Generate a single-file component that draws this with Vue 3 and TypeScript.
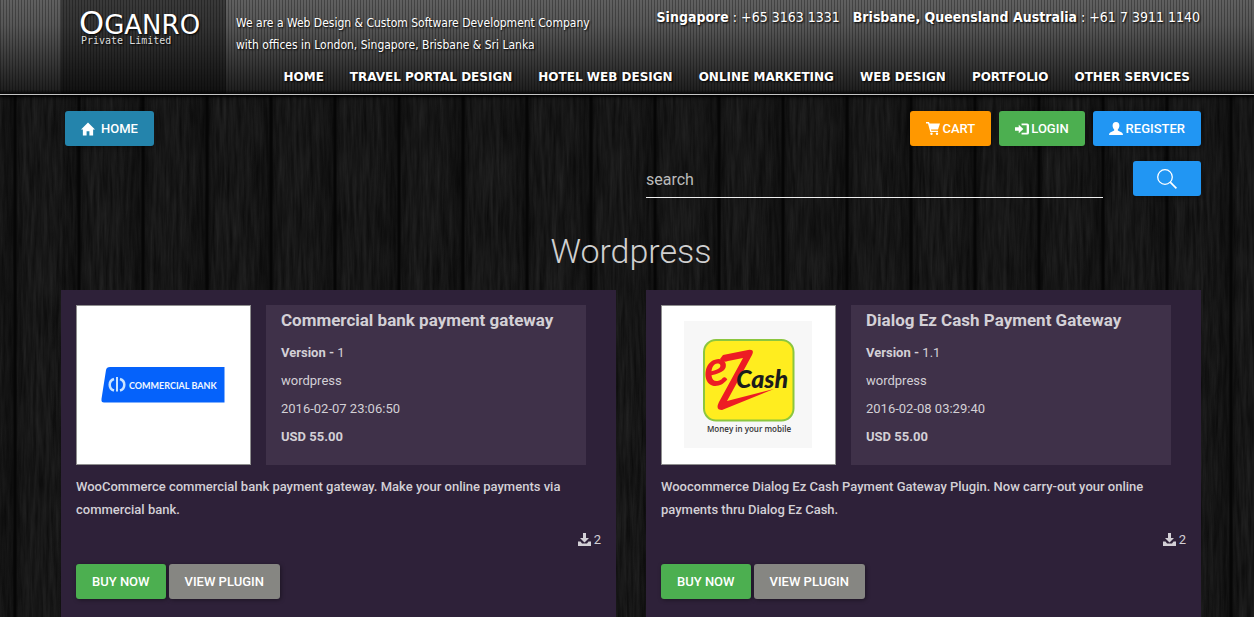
<script setup lang="ts">
interface Plugin {
  title: string
  version: string
  date: string
  text: string
  logo: 'bank' | 'cash'
  downloads: number
}

const navItems: string[] = [
  'HOME',
  'TRAVEL PORTAL DESIGN',
  'HOTEL WEB DESIGN',
  'ONLINE MARKETING',
  'WEB DESIGN',
  'PORTFOLIO',
  'OTHER SERVICES',
]

const plugins: Plugin[] = [
  {
    title: 'Commercial bank payment gateway',
    version: '1',
    date: '2016-02-07 23:06:50',
    text: 'WooCommerce commercial bank payment gateway. Make your online payments via commercial bank.',
    logo: 'bank',
    downloads: 2,
  },
  {
    title: 'Dialog Ez Cash Payment Gateway',
    version: '1.1',
    date: '2016-02-08 03:29:40',
    text: 'Woocommerce Dialog Ez Cash Payment Gateway Plugin. Now carry-out your online payments thru Dialog Ez Cash.',
    logo: 'cash',
    downloads: 2,
  },
]
</script>

<template>
  <div class="page">
    <svg class="grain" aria-hidden="true">
      <filter id="wood" x="0" y="0" width="100%" height="100%" color-interpolation-filters="sRGB">
        <feTurbulence type="fractalNoise" baseFrequency="0.3 0.02" numOctaves="4" seed="7" />
        <feColorMatrix values="0.11 0 0 0 0.035  0.11 0 0 0 0.035  0.11 0 0 0 0.035  0 0 0 0 1" />
      </filter>
      <rect width="100%" height="100%" filter="url(#wood)" />
    </svg>
    <div class="planks"></div>

    <header class="top">
      <div class="wrap top-row">
        <a class="brand" href="#">
          <svg width="130" height="34" viewBox="0 0 130 34">
            <text x="-2" y="23" class="brand-name"><tspan class="brand-big">O</tspan>GANRO</text>
            <text x="0" y="33" class="brand-sub">Private Limited</text>
          </svg>
        </a>
        <div class="top-main">
          <div class="top-info">
            <p class="tagline">
              We are a Web Design &amp; Custom Software Development Company<br />
              with offices in London, Singapore, Brisbane &amp; Sri Lanka
            </p>
            <p class="phones">
              <span><b>Singapore</b> : +65 3163 1331</span>
              <span><b>Brisbane, Queensland Australia</b> : +61 7 3911 1140</span>
            </p>
          </div>
          <nav class="nav">
            <a v-for="item in navItems" :key="item" href="#">{{ item }}</a>
          </nav>
        </div>
      </div>
    </header>

    <main class="wrap">
      <div class="actions">
        <a class="btn home" href="#">
          <svg class="ico wide" width="14" height="14" viewBox="0 0 15 14" fill="#fff">
            <path d="M7.500 0L15 7.500h-2V14H9V9.500H6V14H2V7.500H0z" />
          </svg>HOME
        </a>
        <div class="account">
          <a class="btn cart" href="#">
            <svg class="ico" width="14" height="13" viewBox="0 0 14 13" fill="#fff">
              <path d="M0 0h3l.6 1.500H14L12 7.500H5l.3 1.200H12V10H4.300L2 1.500H0z" />
              <circle cx="5.500" cy="11.700" r="1.200" /><circle cx="11" cy="11.700" r="1.200" />
            </svg>CART
          </a>
          <a class="btn green" href="#">
            <svg class="ico tight" width="14" height="12" viewBox="0 0 15 12" fill="#fff">
              <path d="M0 4h4V1.500L9 6l-5 4.500V8H0z" />
              <path d="M7 0h6q2 0 2 2v8q0 2-2 2H7v-2h5.500V2H7z" />
            </svg>LOGIN
          </a>
          <a class="btn blue" href="#">
            <svg class="ico" width="14" height="13" viewBox="0 0 14 13" fill="#fff">
              <path d="M7 0c2.300 0 3.400 1.600 3.400 3.500 0 1.700-.6 3-1.600 3.900v1.200l4 1.900q1.200.6 1.200 2.500H0q0-1.900 1.200-2.500l4-1.900V7.400C4.200 6.500 3.600 5.200 3.600 3.500 3.600 1.600 4.700 0 7 0z" />
            </svg>REGISTER
          </a>
        </div>
      </div>

      <form class="search" @submit.prevent>
        <input type="text" placeholder="search" aria-label="search" />
        <button class="btn blue" type="submit" aria-label="Search">
          <svg width="20" height="20" viewBox="0 0 20 20" fill="none" stroke="#fff">
            <circle cx="8" cy="8" r="7.300" stroke-width="1.300" />
            <path d="M13.200 13.200L19.400 19.400" stroke-width="1.700" />
          </svg>
        </button>
      </form>

      <h1>Wordpress</h1>

      <div class="cards">
        <article v-for="p in plugins" :key="p.title" class="card">
          <div class="summary">
            <div class="thumb">
              <svg v-if="p.logo === 'bank'" width="125" height="36" viewBox="0 0 125 36">
                <path d="M9 0H123.500V35.500H3Q0 35.500.5 32L5 3Q5.500 0 9 0z" fill="#0562fb" />
                <g fill="none" stroke="#c9e4ff">
                  <path d="M13 12a6 6 0 0 0 0 11.500" stroke-width="2.500" />
                  <path d="M19 12a6 6 0 0 1 0 11.500" stroke-width="2.500" />
                  <path d="M16 10v14.500" stroke-width="2" />
                </g>
                <text x="28" y="22" class="bank-name">COMMERCIAL BANK</text>
              </svg>
              <svg v-else width="129" height="128" viewBox="0 0 129 128">
                <rect width="128" height="127" fill="#f7f7f7" />
                <rect x="20" y="19" width="89.500" height="80.500" rx="12" fill="#ffed1f" stroke="#8cc63f" stroke-width="2" />
                <text x="22" y="66" class="cash-e" transform="rotate(-8 22 66)">e</text>
                <path d="M39 34L64 29Q71 28 68 34L43 80L90 68L38 89Q31 89 35 81L59 37L44 40Q39 42 36 38z" fill="#ed1c24" />
                <text x="52" y="67" class="cash-name">Cash</text>
                <text x="23" y="111" class="cash-sub">Money in your mobile</text>
              </svg>
            </div>
            <div class="details">
              <h2>{{ p.title }}</h2>
              <p><b>Version - </b>{{ p.version }}</p>
              <p>wordpress</p>
              <p>{{ p.date }}</p>
              <p><b>USD 55.00</b></p>
            </div>
          </div>
          <p class="text">{{ p.text }}</p>
          <p class="downloads">
            <svg width="13" height="13" viewBox="0 0 13 13" fill="#d3d0d6">
              <path d="M5 0h3v5h3L6.500 9.500 2 5h3z" />
              <path d="M0 8.500h2.500L4 10.500h5l1.500-2H13V13H0z" />
            </svg>
            <span>{{ p.downloads }}</span>
          </p>
          <div class="buttons">
            <button class="btn green" type="button">BUY NOW</button>
            <button class="btn grey" type="button">VIEW PLUGIN</button>
          </div>
        </article>
      </div>
    </main>
  </div>
</template>

<style>
body {
  margin: 0;
  background: #151515;
}
</style>

<style scoped>
* {
  box-sizing: border-box;
}
.page {
  position: relative;
  min-height: 100vh;
  overflow: hidden;
  padding-left: 8px;
  font: 400 13px/23px Roboto, sans-serif;
  color: #d3d0d6;
}
.grain,
.planks {
  position: absolute;
  inset: 0;
  width: 100%;
  height: 100%;
}
.planks {
  background: repeating-linear-gradient(
    90deg,
    rgba(0, 0, 0, 0.1) 0,
    rgba(0, 0, 0, 0.3) 13px,
    #060606 14px,
    #060606 16px,
    rgba(0, 0, 0, 0.25) 17px,
    rgba(0, 0, 0, 0) 24px,
    rgba(0, 0, 0, 0) 48px,
    rgba(0, 0, 0, 0.1) 64px
  );
}
h1,
h2,
p {
  margin: 0;
}
a {
  color: inherit;
  text-decoration: none;
}
.wrap {
  position: relative;
  width: calc(100% - 32px);
  max-width: 1140px;
  margin: 0 auto;
}

.top {
  position: relative;
  margin-left: -8px;
  padding-left: 8px;
  border-bottom: 1px solid #c4c4c4;
  box-shadow: 0 1px 3px 1px #000;
  background:
    linear-gradient(rgba(0, 0, 0, 0) 0, rgba(0, 0, 0, 0.1) 25px, rgba(0, 0, 0, 0.68) 90px, #0a0a0a 93px),
    repeating-linear-gradient(90deg, #444 0, #444 1px, #606060 1px, #606060 3px);
  color: #fff;
  font-family: "DejaVu Sans Condensed", "Noto Sans", sans-serif;
  text-shadow: 1px 1px 2px #000;
}
.top-row {
  display: flex;
  min-height: 94px;
}
.brand {
  width: 165px;
  padding: 11px 0 0 20px;
  background: rgba(0, 0, 0, 0.4);
}
.brand svg {
  overflow: visible;
}
.brand-name {
  font: 26px "DejaVu Sans", sans-serif;
  fill: #fff;
}
.brand-big {
  font-size: 32px;
}
.brand-sub {
  font: 10px "DejaVu Sans Mono", monospace;
  fill: #ddd;
}
.top-main {
  flex: 1;
  padding-left: 10px;
}
.top-info {
  display: flex;
  justify-content: space-between;
  min-height: 66px;
}
.tagline {
  padding-top: 12px;
  font-size: 12px;
  line-height: 22px;
}
.phones {
  display: flex;
  gap: 13px;
  padding: 6px 1px 0 0;
  font-size: 14px;
}
.nav {
  display: flex;
  justify-content: flex-end;
  gap: 26px;
  padding-right: 11px;
  font-family: "DejaVu Sans", sans-serif;
  font-size: 12px;
  font-weight: 700;
}

.actions {
  display: flex;
  justify-content: space-between;
  padding: 16px 0 0 4px;
}
.account {
  display: flex;
  gap: 8px;
}
.btn {
  display: inline-flex;
  align-items: center;
  justify-content: center;
  height: 35px;
  padding: 0 16px;
  border: 0;
  border-radius: 3px;
  box-shadow: 1px 1px 4px rgba(0, 0, 0, 0.4);
  color: #fff;
  font: 500 13px/20px Roboto, sans-serif;
}
.ico {
  margin-right: 3px;
}
.wide {
  margin-right: 6px;
}
.tight {
  margin-right: 2px;
}
.home {
  background: #2484ac;
}
.cart {
  background: #ff9800;
}
.green {
  background: #4caf50;
}
.blue {
  background: #2196f3;
}
.grey {
  background: #868682;
}

.search {
  display: flex;
  gap: 30px;
  width: calc(50% - 15px);
  margin: 15px 0 0 auto;
}
.search input {
  flex: 1;
  min-width: 0;
  height: 37px;
  padding: 0;
  border: 0;
  border-bottom: 1px solid #eee;
  background: transparent;
  color: #ccc;
  font: 400 16px/24px Roboto, sans-serif;
}
.search input::placeholder {
  color: #bbb;
  opacity: 1;
}
.search .btn {
  width: 68px;
}
h1 {
  margin: 33px 0 19px;
  font-size: 34px;
  font-weight: 300;
  line-height: 40px;
  text-align: center;
  color: #d0d0d0;
}

.cards {
  display: grid;
  grid-template-columns: 1fr 1fr;
  gap: 30px;
}
.card {
  padding: 15px 15px 24px;
  background: #2e2139;
}
.summary {
  display: flex;
  gap: 15px;
  padding-right: 15px;
}
.thumb {
  display: grid;
  place-items: center;
  flex: none;
  width: 175px;
  height: 160px;
  border: 1px solid #8f8f8f;
  background: #fff;
}
.bank-name {
  font: 700 9px Lato, sans-serif;
  fill: #f0f7ff;
}
.cash-e {
  font: italic 700 50px Lato, sans-serif;
  fill: #ed1c24;
}
.cash-name {
  font: italic 900 25px Lato, sans-serif;
  fill: #1c1c1c;
}
.cash-sub {
  font: 600 8px "Open Sans", sans-serif;
  fill: #333;
}
.details {
  flex: 1;
  padding-left: 15px;
  background: #3f3149;
}
.details h2 {
  margin: 4px 0 7px;
  font-size: 17px;
  line-height: 23px;
  font-weight: 700;
}
.details p {
  line-height: 28px;
}
.text {
  margin-top: 10px;
  font-weight: 500;
}
.downloads {
  display: flex;
  align-items: center;
  justify-content: flex-end;
  gap: 3px;
  height: 23px;
  margin-top: 7px;
}
.buttons {
  display: flex;
  gap: 3px;
  margin-top: 13px;
}
</style>
